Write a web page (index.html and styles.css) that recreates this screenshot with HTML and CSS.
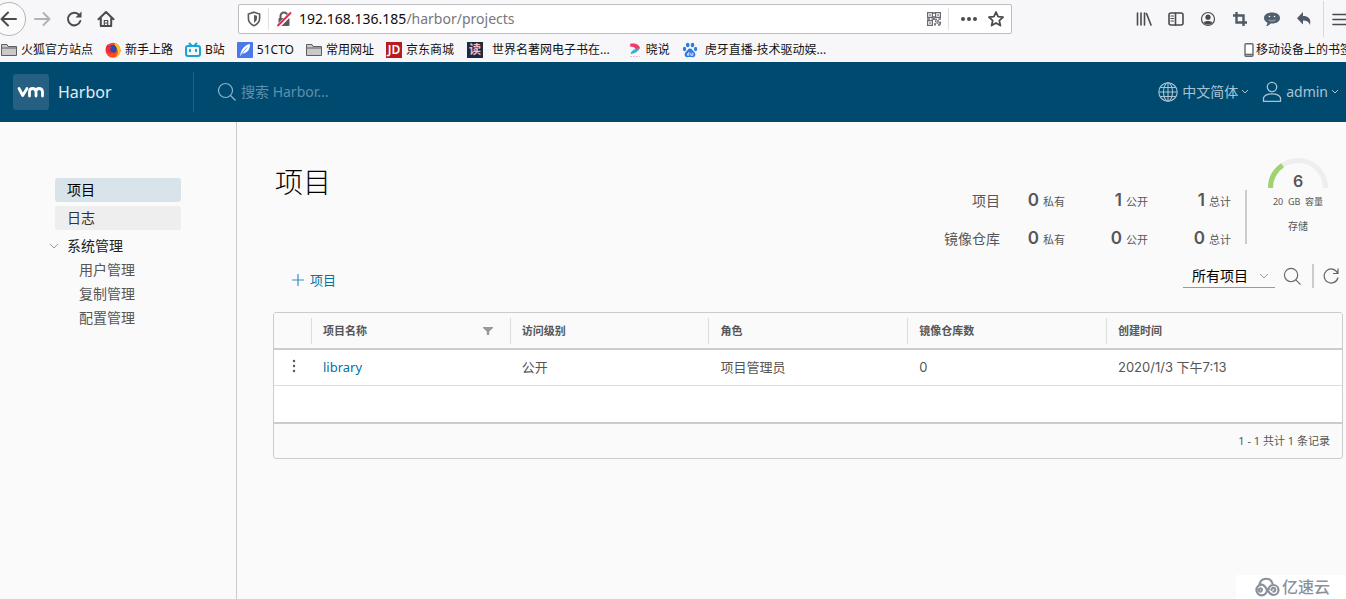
FILE: index.html
```html
<!DOCTYPE html>
<html lang="zh-CN">
<head>
<meta charset="utf-8">
<title>Harbor</title>
<link rel="stylesheet" href="styles.css">
</head>
<body>
<div class="browser">
  <div class="toolbar">
    <div class="tools tools-nav">
      <button class="tool tool-back" type="button" aria-label="后退"><svg width="34" height="34" viewBox="0 0 34 34"><circle cx="17" cy="17" r="16.5" fill="#fbfbfc" stroke="#b4b4b8"/><path d="M24 17H10M16 10.500L9.500 17l6.500 6.500" class="ln"/></svg></button>
      <button class="tool" type="button" aria-label="前进"><svg width="18" height="18" viewBox="0 0 18 18"><path d="M2 9h14M10.500 3l6 6-6 6" class="ln ln-off"/></svg></button>
      <button class="tool" type="button" aria-label="刷新"><svg width="18" height="18" viewBox="0 0 18 18"><path d="M14.300 5.200A6.300 6.300 0 1 0 15.300 11" class="ln"/><path d="M16.500 1.500v6h-6z" fill="#4a4a4f"/></svg></button>
      <button class="tool" type="button" aria-label="主页"><svg width="18" height="18" viewBox="0 0 18 18"><path d="M1.500 9.300L9 2l7.500 7.300M3.800 8.500V16h10.400V8.500" class="ln"/><path d="M7.300 15.500V10.500h3.400v5M9 12.500v1" class="ln ln-thin"/></svg></button>
    </div>
    <div class="spacer"></div>
    <div class="urlbar">
      <svg width="14" height="16" viewBox="0 0 14 16"><path d="M7 1.200L12.600 3v4.500c0 3.300-2.500 5.800-5.600 7.200-3.100-1.400-5.600-3.900-5.600-7.200V3z" fill="none" stroke="#5a5a5f" stroke-width="1.600"/><path d="M7 4v7.800c2-1.200 3-2.700 3-4.700V4.800z" fill="#5a5a5f"/></svg>
      <span class="rule"></span>
      <svg class="lock" width="16" height="16" viewBox="0 0 16 16"><path d="M4.500 8V5a3.500 3.500 0 0 1 7 0v3" fill="none" stroke="#5a5a5f" stroke-width="2"/><rect x="2.500" y="7" width="11" height="8" rx="1" fill="#5a5a5f"/><path d="M2 15.500L15.500 2" stroke="#fff" stroke-width="4"/><path d="M1.500 15L15 1.500" stroke="#e22850" stroke-width="2"/></svg>
      <div class="address"><span class="host">192.168.136.185</span>/harbor/projects</div>
      <svg width="14" height="14" viewBox="0 0 14 14" fill="none" stroke="#6a6a70" stroke-width="1.200"><path d="M.6.600h4.800v4.800H.6zM8.600.600h4.800v4.800H8.600zM.6 8.600h4.800v4.800H.6z"/><path d="M2.300 3h1.500M10.300 3h1.500M2.300 11h1.500M7 0v2M7 4v4M0 7h3M4.500 7h2M8 7.500h2M11.500 7h2.500M8 9.500h1.500M10 9h2M12 10.500h2M9.500 11h2M7 12h2M11 13h2M7.500 13.500h1M12.500 12h1.500" stroke-width="1.600"/></svg>
      <span class="rule"></span>
      <svg width="18" height="16" viewBox="0 0 18 16" fill="#4a4a4f"><circle cx="3" cy="8" r="2"/><circle cx="9" cy="8" r="2"/><circle cx="15" cy="8" r="2"/></svg>
      <svg width="18" height="18" viewBox="0 0 18 18"><path d="M9 2l2.100 4.700 5 .500-3.800 3.400 1.100 5L9 13l-4.400 2.600 1.100-5L1.900 7.200l5-.500z" fill="none" stroke="#4a4a4f" stroke-width="1.800" stroke-linejoin="round"/></svg>
    </div>
    <div class="spacer"></div>
    <div class="tools">
      <button class="tool" type="button" aria-label="我的足迹"><svg width="16" height="16" viewBox="0 0 16 16"><path d="M1.500 2v12M5 2v12M8.500 2v12M10.500 2.500L15 14" class="ln ln-mid"/></svg></button>
      <button class="tool" type="button" aria-label="侧栏"><svg width="16" height="16" viewBox="0 0 16 16"><rect x="1" y="2" width="14" height="12" rx="2" class="ln ln-mid"/><path d="M7.500 2v12" class="ln ln-mid"/><path d="M3 5h2.500M3 7.500h2.500M3 10h2.500" class="ln ln-thin"/></svg></button>
      <button class="tool" type="button" aria-label="账户"><svg width="16" height="16" viewBox="0 0 16 16"><circle cx="8" cy="8" r="6.500" class="ln ln-thin"/><circle cx="8" cy="6.200" r="2.600" fill="#4a4a4f"/><path d="M3.500 11.500c2-2 7-2 9 0-2 3-7 3-9 0z" fill="#4a4a4f"/></svg></button>
      <button class="tool" type="button" aria-label="截图"><svg width="16" height="16" viewBox="0 0 16 16"><path d="M4.500 1v10.500H15M1 4.500h10.500V15" fill="none" stroke="#4f5a66" stroke-width="2.400"/></svg></button>
      <button class="tool" type="button" aria-label="消息"><svg width="18" height="16" viewBox="0 0 18 16"><path d="M9 1.500c4.600 0 8 2.200 8 5.500s-3.400 5.500-8 5.500l-1.500-.1c-1 1.600-2.500 2.500-4.500 2.600 1-1 1.500-2 1.400-3.300C2.300 10.700 1 9 1 7c0-3.300 3.400-5.500 8-5.500z" fill="#4f6070"/><circle cx="6.500" cy="5.500" r=".8" fill="#fff"/><circle cx="11.500" cy="5.500" r=".8" fill="#fff"/><path d="M5.500 8.800c2 1.500 5 1.500 7 0" fill="none" stroke="#fff" stroke-width=".5"/></svg></button>
      <button class="tool" type="button" aria-label="撤销"><svg width="16" height="16" viewBox="0 0 16 16"><path d="M7 1v4c5 0 8.500 2.500 7 9-1-3.300-3.200-4.500-7-4.500v4L1 7.200z" fill="#4f5a66"/></svg></button>
      <button class="tool tool-menu" type="button" aria-label="菜单"><svg width="16" height="16" viewBox="0 0 16 16"><path d="M1 3.500h14M1 8.500h14M1 13.500h14" class="ln ln-mid"/></svg></button>
    </div>
  </div>
  <nav class="bookmarks">
    <a class="mark" href="#"><svg width="16" height="14" viewBox="0 0 16 14"><path d="M.5 12.500v-11h5.500l1 2h8.500v9z" fill="#c9c9c9" stroke="#5f5f5f"/><path d="M1 5h14" stroke="#5f5f5f"/></svg>火狐官方站点</a>
    <a class="mark" href="#"><svg width="16" height="16" viewBox="0 0 16 16"><circle cx="8" cy="8.300" r="7.500" fill="#ff4a22"/><path d="M10 .8c4 2 6 5.200 5.400 9-1 4-4 6-7.500 6 4-1 5.600-4 4.600-7.500-.5-2-3.500-4-2.500-7.500z" fill="#ffc21e"/><path d="M4 5c2-3 6-3 7.500.500 1 3-.5 5.500-3.500 5.500s-4-3-4-6z" fill="#2b4ba8"/><path d="M.7 7C1 4 2.500 2.500 3.500 2l.5 2.500 3 .500-2 2c0 2 1 3.300 3.500 3-2 3-7 2-7.800-3z" fill="#f0283c"/></svg>新手上路</a>
    <a class="mark" href="#"><svg width="16" height="16" viewBox="0 0 16 16" fill="none" stroke="#18a4d8" stroke-width="2" stroke-linecap="round"><path d="M4.500 1.500l2 2M11.500 1.500l-2 2M5 7.800v1.400M11 7.800v1.400"/><rect x="1" y="4" width="14" height="10" rx="2"/></svg>B站</a>
    <a class="mark" href="#"><svg width="16" height="16" viewBox="0 0 16 16"><rect width="16" height="16" rx="1" fill="#4a79e8"/><path d="M3 14C4 8 7 3 13 2c0 5-2 9-7.500 9.500z" fill="#fff"/><path d="M4 12.500L10 5.500" stroke="#4a79e8" stroke-width=".7"/></svg>51CTO</a>
    <a class="mark" href="#"><svg width="16" height="14" viewBox="0 0 16 14"><path d="M.5 12.500v-11h5.500l1 2h8.500v9z" fill="#c9c9c9" stroke="#5f5f5f"/><path d="M1 5h14" stroke="#5f5f5f"/></svg>常用网址</a>
    <a class="mark" href="#"><span class="jd">JD</span>京东商城</a>
    <a class="mark mark-wide" href="#"><span class="book">读</span>世界名著网电子书在...</a>
    <a class="mark" href="#"><svg width="14" height="16" viewBox="0 0 14 16"><path d="M2 2c5-1.500 9.500 1 10 4.200-1.500 1.300-3 1.300-4.500.800C6.500 5 4.500 4.500 2.500 5z" fill="#f23b6c"/><path d="M12 6.500C9.500 10 6.500 11.800 2.500 12 2.700 9.500 5 8 7.500 7z" fill="#24b9d8"/><path d="M2 14.500h10" stroke="#f2b4c6" stroke-dasharray="2 1"/></svg>晓说</a>
    <a class="mark mark-baidu" href="#"><svg width="16" height="16" viewBox="0 0 16 16" fill="#2f7be4"><ellipse cx="5.700" cy="3" rx="1.800" ry="2.300"/><ellipse cx="10.500" cy="3" rx="1.800" ry="2.300"/><ellipse cx="2.500" cy="7" rx="1.600" ry="2.200"/><ellipse cx="13.600" cy="7" rx="1.600" ry="2.200"/><path d="M8 6.500c2 0 2.500 2 4 3.300 2.300 2 1.500 5.700-1.200 5.400-2-.4-3.500-.4-5.500 0-2.800.300-3.600-3.300-1.300-5.400C5.500 8.500 6 6.500 8 6.500z"/><path d="M6.800 10v3.300M6.800 13.300H5.500v-1.500h1M8.800 10.800v2.500h2v-2.500" stroke="#fff" stroke-width=".8" fill="none"/></svg>虎牙直播-技术驱动娱...</a>
    <a class="mark mark-mobile" href="#"><svg width="10" height="14" viewBox="0 0 10 14"><rect x="1" y=".7" width="8" height="12.600" rx="1" fill="#fff" stroke="#66686e" stroke-width="1.400"/><path d="M1 11.500h8" stroke="#66686e" stroke-width="1.600"/></svg>移动设备上的书签</a>
  </nav>
</div>

<header class="header">
  <a class="brand" href="#"><span class="logo"><svg width="28" height="12" viewBox="0 0 28 12" fill="none" stroke="#fff" stroke-width="2.800" stroke-linecap="round" stroke-linejoin="round"><path d="M2 2.500L5.700 9.500 10 2.500"/><path d="M12.500 10V5.500Q12.500 2.500 15.500 2.500T19 5.500V10M19 5.500Q19 2.500 22 2.500T25.500 5.500V10"/></svg></span>Harbor</a>
  <label class="search"><svg width="20" height="20" viewBox="0 0 20 20" fill="none" stroke="#8fb3c8" stroke-width="1.200"><circle cx="8.500" cy="8.500" r="7"/><path d="M13.500 13.500l5 5"/></svg><input type="text" placeholder="搜索 Harbor..." aria-label="搜索 Harbor"></label>
  <div class="account">
    <button class="drop" type="button"><svg width="20" height="20" viewBox="0 0 20 20" fill="none" stroke="#a9c3d2" stroke-width="1.100"><circle cx="10" cy="10" r="9.200"/><ellipse cx="10" cy="10" rx="4.500" ry="9.200"/><path d="M10 1v18M1 10h18M2.500 5.500h15M2.500 14.500h15"/></svg><span>中文简体</span><svg width="8" height="6" viewBox="0 0 8 6" class="caret"><path d="M1 1l3 3 3-3"/></svg></button>
    <button class="drop" type="button"><svg width="20" height="22" viewBox="0 0 20 22" fill="none" stroke="#a9c3d2" stroke-width="1.300"><circle cx="10" cy="6" r="4.700"/><path d="M1.500 20.300v-3.500c2-5.300 15-5.300 17 0v3.500z"/></svg><span>admin</span><svg width="8" height="6" viewBox="0 0 8 6" class="caret"><path d="M1 1l3 3 3-3"/></svg></button>
  </div>
</header>

<div class="page">
  <nav class="side">
    <a class="item item-active" href="#">项目</a>
    <a class="item item-hover" href="#">日志</a>
    <button class="group" type="button"><svg width="10" height="8" viewBox="0 0 10 8" fill="none" stroke="#999"><path d="M1 2l4 4 4-4"/></svg>系统管理</button>
    <a class="sub" href="#">用户管理</a>
    <a class="sub" href="#">复制管理</a>
    <a class="sub" href="#">配置管理</a>
  </nav>

  <main class="main">
    <div class="top">
      <h1 class="title">项目</h1>
      <div class="summary">
        <div class="stats">
          <span class="name">项目</span>
          <b class="num">0</b><span class="cap">私有</span>
          <b class="num">1</b><span class="cap">公开</span>
          <b class="num">1</b><span class="cap">总计</span>
          <span class="name">镜像仓库</span>
          <b class="num">0</b><span class="cap">私有</span>
          <b class="num">0</b><span class="cap">公开</span>
          <b class="num">0</b><span class="cap">总计</span>
        </div>
        <div class="gauge">
          <svg width="60" height="30" viewBox="0 0 60 30" fill="none" stroke-width="5"><path d="M2.500 30a27.500 27.500 0 0 1 55 0" stroke="#eee"/><path d="M2.500 30A27.500 27.500 0 0 1 14.500 7.300" stroke="#9fd36f"/></svg>
          <b class="used">6</b>
          <span class="quota">20&nbsp; GB&nbsp; 容量</span>
          <span class="store">存储</span>
        </div>
      </div>
    </div>

    <div class="actions">
      <button class="add" type="button"><svg width="12" height="12" viewBox="0 0 12 12" stroke="#3a8fc4" stroke-width="1.200"><path d="M6 0v12M0 6h12"/></svg>项目</button>
      <div class="filters">
        <div class="pick"><select aria-label="项目范围"><option>所有项目</option></select><svg width="10" height="8" viewBox="0 0 10 8" fill="none" stroke="#999"><path d="M1 2l4 4 4-4"/></svg></div>
        <button class="icon" type="button" aria-label="搜索"><svg width="19" height="19" viewBox="0 0 20 20" fill="none" stroke="#666" stroke-width="1.200"><circle cx="8.500" cy="8.500" r="7"/><path d="M13.500 13.500l5 5"/></svg></button>
        <span class="bar"></span>
        <button class="icon" type="button" aria-label="刷新列表"><svg width="18" height="18" viewBox="0 0 18 18" fill="none" stroke="#666" stroke-width="1.200"><path d="M15.500 6A7 7 0 1 0 16 10.500M16 1.500v5h-5"/></svg></button>
      </div>
    </div>

    <div class="grid">
      <table class="table">
        <colgroup><col class="c-act"><col><col><col><col><col class="c-time"></colgroup>
        <thead>
          <tr><th></th><th><div class="cell">项目名称<svg width="10" height="8" viewBox="0 0 10 8"><path d="M0 0h10v1L6.200 4.500V8H3.800V4.500L0 1z" fill="#999"/></svg></div></th><th><div class="cell">访问级别</div></th><th><div class="cell">角色</div></th><th><div class="cell">镜像仓库数</div></th><th><div class="cell">创建时间</div></th></tr>
        </thead>
        <tbody>
          <tr><td class="dots"><button type="button" aria-label="操作"><svg width="4" height="14" viewBox="0 0 4 14" fill="#555"><circle cx="2" cy="2" r="1.200"/><circle cx="2" cy="7" r="1.200"/><circle cx="2" cy="12" r="1.200"/></svg></button></td><td><a href="#">library</a></td><td>公开</td><td>项目管理员</td><td class="val">0</td><td class="val">2020/1/3 下午7:13</td></tr>
          <tr><td colspan="6"></td></tr>
        </tbody>
      </table>
      <div class="foot">1 - 1 共计 1 条记录</div>
    </div>
  </main>
</div>
<div class="watermark"><svg width="26" height="20" viewBox="0 0 26 20" fill="none" stroke="#8b919c" stroke-width="2.200" stroke-linecap="round"><path d="M5.500 7.500C7 0 16.500 0 18.500 6.500"/><path d="M8 12.800a1.600 1.600 0 1 0-.8 1.600M13 13a5.300 5.300 0 1 1-5.300-5.300C12.500 7.700 13.500 18 19.500 18a5 5 0 1 0-5-5"/><path d="M17.500 13a1.900 1.900 0 1 1 1.900 1.700"/></svg>亿速云</div>
</body>
</html>
```

FILE: styles.css
```css
* { box-sizing: border-box; }

body {
  margin: 0;
  min-height: 100vh;
  display: flex;
  flex-direction: column;
  overflow: hidden;
  background: #fafafa;
  color: #565656;
  font: 14px/24px "Noto Sans", "Noto Sans CJK SC", sans-serif;
}

a { color: inherit; text-decoration: none; }
svg { flex: none; display: block; }
button, input, select {
  padding: 0;
  border: 0;
  background: none;
  color: inherit;
  font: inherit;
}

/* browser chrome */
.browser { background: #f7f7fa; color: #111; overflow: hidden; }
.toolbar { display: flex; align-items: center; height: 38px; }
.tools { display: flex; flex: none; }
.tools-nav { margin-left: -6px; }
.tool {
  width: 32px;
  height: 36px;
  display: flex;
  align-items: center;
  justify-content: center;
}
.tool-back { margin-left: -1px; margin-right: 1px; }
.tool-menu { margin: 0 -9px 0 3px; border-left: 1px solid #d9d9dc; }
.ln { fill: none; stroke: #4a4a4f; stroke-width: 2; stroke-linecap: round; stroke-linejoin: round; }
.ln-off { stroke: #b2b2b6; }
.ln-mid { stroke-width: 1.6; }
.ln-thin { stroke-width: 1.2; }
.spacer { flex: 118; }
.urlbar {
  flex: 771;
  height: 30px;
  display: flex;
  align-items: center;
  gap: 7px;
  padding: 0 6px 0 8px;
  border: 1px solid #bdbdc0;
  border-radius: 2px;
  background: #fff;
}
.rule { width: 1px; height: 22px; background: #e0e0e2; }
.address { flex: 1; color: #77777b; white-space: nowrap; }
.host { color: #0c0c0d; }
.urlbar svg:last-child { margin-left: 2px; }
.urlbar .rule ~ .rule { margin: 0 4px 0 0; }

.bookmarks {
  display: flex;
  align-items: center;
  gap: 12px;
  height: 24px;
  padding-left: 1px;
  font-size: 12px;
  white-space: nowrap;
}
.mark { display: flex; align-items: center; gap: 4px; flex: none; }
.mark-wide { gap: 9px; margin-left: 1px; margin-right: 6px; }
.mark-baidu { gap: 7px; }
.mark-mobile { gap: 2px; margin-left: auto; margin-right: -6px; }
.jd, .book {
  width: 16px;
  height: 16px;
  color: #fff;
  background: #b81c22;
  font-size: 12px;
  line-height: 16px;
  text-align: center;
}
.jd { font-weight: 600; }
.book { background: #1d2c3c; color: #f4b8c4; font-weight: 700; }

/* application header */
.header {
  display: flex;
  align-items: center;
  height: 60px;
  padding: 0 7px 0 13px;
  background: #004a70;
  color: #a9c3d2;
}
.brand {
  display: flex;
  align-items: center;
  gap: 9px;
  width: 181px;
  height: 40px;
  border-right: 1px solid #1f6080;
  color: #e3edf3;
  font-size: 16px;
}
.logo {
  display: flex;
  align-items: center;
  justify-content: center;
  width: 36px;
  height: 36px;
  border-radius: 3px;
  background: #255f82;
}
.search { display: flex; align-items: center; gap: 4px; flex: 1; padding-left: 23px; }
.search input { flex: 1; min-width: 0; outline: 0; }
.search input::placeholder { color: #5f8fab; opacity: 1; }
.account { display: flex; gap: 13px; }
.drop { display: flex; align-items: center; gap: 4px; }
.drop .caret { fill: none; stroke: #a9c3d2; }
.drop span { margin-right: -1px; }

/* side navigation */
.page { display: flex; flex: 1; }
.side {
  flex: none;
  width: 237px;
  padding: 56px 55px 0;
  border-right: 1px solid #ccc;
  display: flex;
  flex-direction: column;
}
.item {
  height: 24px;
  margin-bottom: 4px;
  padding-left: 12px;
  border-radius: 3px;
}
.item-active { background: #d9e4ea; color: #000; }
.item-hover { background: #eee; color: #333; }
.group {
  display: flex;
  align-items: center;
  gap: 8px;
  height: 24px;
  margin-left: -6px;
  color: #222;
}
.sub { padding-left: 24px; height: 24px; }

/* main area */
.main { flex: 1; min-width: 0; padding: 36px 3px 0 36px; }
.top { display: flex; justify-content: space-between; height: 102px; }
.title {
  margin: 4px 0 0 2px;
  color: #000;
  font-size: 28px;
  line-height: 40px;
  font-weight: 300;
}
.summary { display: flex; align-items: flex-start; }
.stats {
  display: grid;
  grid-template-columns: auto 39px 40px 43px 40px 43px 40px;
  grid-auto-rows: 38px;
  align-items: baseline;
  height: 54px;
  margin-top: 32px;
  border-right: 2px solid #ccc;
  line-height: 20px;
}
.name { text-align: right; }
.num {
  text-align: right;
  font-family: Inter, "Noto Sans", sans-serif;
  font-size: 17px;
  font-weight: 600;
}
.cap { padding-left: 4px; font-size: 11px; white-space: nowrap; }
.gauge {
  display: flex;
  flex-direction: column;
  align-items: center;
  width: 96px;
  padding-left: 6px;
  font-size: 9px;
}
.used {
  margin-top: -18px;
  font: 600 16px/22px Inter, "Noto Sans", sans-serif;
}
.quota { line-height: 20px; }
.store { font-size: 10px; line-height: 28px; }

.actions {
  display: flex;
  justify-content: space-between;
  align-items: flex-start;
  height: 52px;
  padding: 4px 3px 0 19px;
}
.add {
  display: flex;
  align-items: center;
  gap: 6px;
  margin-top: 4px;
  color: #0072a3;
  font-size: 13px;
}
.filters { display: flex; align-items: center; }
.pick {
  display: flex;
  align-items: center;
  width: 92px;
  height: 24px;
  padding: 0 6px 0 9px;
  border-bottom: 1px solid #999;
  color: #000;
}
.pick select { appearance: none; flex: 1; min-width: 0; outline: 0; }
.icon { margin-left: 8px; }
.bar { width: 2px; height: 24px; margin-left: 10px; background: #ccc; }

.grid {
  border: 1px solid #ccc;
  border-radius: 3px;
  overflow: hidden;
}
.table {
  width: 100%;
  table-layout: fixed;
  border-collapse: separate;
  border-spacing: 0;
  background: #fff;
  font-size: 13px;
}
.c-act { width: 37px; }
.c-time { width: 22.1%; }
.table th {
  height: 37px;
  padding: 0;
  border-bottom: 2px solid #ccc;
  background: #fafafa;
  font-size: 11px;
  font-weight: 600;
  line-height: 22px;
  text-align: left;
}
.cell {
  display: flex;
  align-items: center;
  justify-content: space-between;
  height: 26px;
  padding: 0 17px 0 11px;
  border-left: 1px solid #ddd;
}
.table td { height: 36px; padding: 0 12px 2px; }
.table tbody tr:first-child td { border-bottom: 1px solid #ddd; }
.table td.dots { padding: 0 0 0 18px; }
.table td a { color: #0072a3; }
.table .val { font-family: Inter, "Noto Sans CJK SC", sans-serif; }
.foot {
  height: 36px;
  padding: 0 12px;
  border-top: 2px solid #ccc;
  font-size: 11px;
  line-height: 34px;
  text-align: right;
}

.watermark {
  position: absolute;
  right: 0;
  bottom: 0;
  display: flex;
  align-items: center;
  gap: 2px;
  padding: 0 16px 0 18px;
  background: #fff;
  color: #8b919c;
  font-size: 16px;
  font-weight: 500;
}
```
